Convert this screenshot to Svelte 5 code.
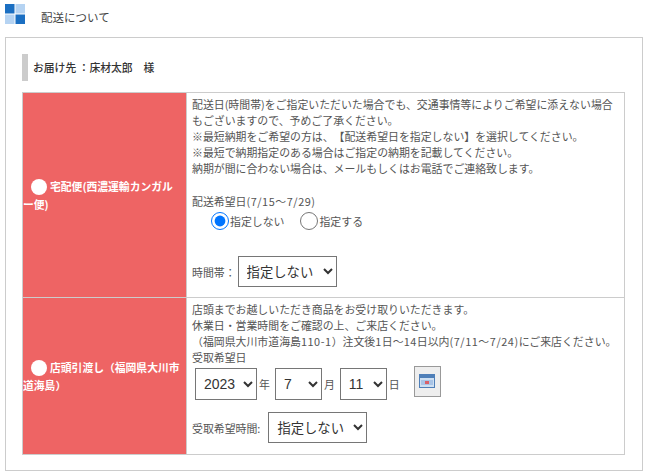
<script>
  const years = ['2023'];
  const months = ['7'];
  const days = ['11'];
</script>

<div class="page">
  <header class="head">
    <svg class="logo" width="20" height="20" viewBox="0 0 20 20" aria-hidden="true">
      <rect x="0" y="0" width="9.500" height="9.500" fill="#1b6fc2" />
      <rect x="10.500" y="0" width="9.500" height="9.500" fill="#b5d3f2" />
      <rect x="0" y="10.500" width="9.500" height="9.500" fill="#b5d3f2" />
      <rect x="10.500" y="10.500" width="9.500" height="9.500" fill="#1b6fc2" />
    </svg>
    <h1>配送について</h1>
  </header>

  <section class="card">
    <p class="dest">お届け先 ：床材太郎　様</p>

    <table>
      <tbody>
        <tr class="row-a">
          <th>
            <span class="dot"></span>宅配便(西濃運輸カンガル<br />ー便)
          </th>
          <td>
            <p class="note">配送日(時間帯)をご指定いただいた場合でも、交通事情等によりご希望に添えない場合もございますので、予めご了承ください。<br />※最短納期をご希望の方は、【配送希望日を指定しない】を選択してください。<br />※最短で納期指定のある場合はご指定の納期を記載してください。<br />納期が間に合わない場合は、メールもしくはお電話でご連絡致します。</p>
            <p class="wish">配送希望日<span class="n">(7/15～7/29)</span></p>
            <div class="radios">
              <label><input type="radio" name="d" checked />指定しない</label>
              <label><input type="radio" name="d" />指定する</label>
            </div>
            <div class="time-a">
              <span class="lbl">時間帯：</span><select><option>指定しない</option></select>
            </div>
          </td>
        </tr>
        <tr class="row-b">
          <th>
            <span class="dot"></span>店頭引渡し（福岡県大川市<br />道海島）
          </th>
          <td>
            <p class="note">店頭までお越しいただき商品をお受け取りいただきます。<br />休業日・営業時間をご確認の上、ご来店ください。<br />（福岡県大川市道海島<span class="n">110-1</span>）注文後<span class="n">1</span>日～<span class="n">14</span>日以内<span class="n">(7/11～7/24)</span>にご来店ください。<br />受取希望日</p>
            <div class="date">
              <select class="y">{#each years as v}<option>{v}</option>{/each}</select><span>年</span>
              <select class="m">{#each months as v}<option>{v}</option>{/each}</select><span>月</span>
              <select class="m">{#each days as v}<option>{v}</option>{/each}</select><span>日</span>
              <button class="cal" type="button" aria-label="カレンダー">
                <svg width="16" height="14" viewBox="0 0 16 14" aria-hidden="true">
                  <rect x="0.500" y="0.500" width="15" height="13" fill="#cfe0f2" stroke="#4f7fb8" />
                  <rect x="1" y="1" width="14" height="3" fill="#4f7fb8" />
                  <rect x="2" y="6" width="12" height="5" fill="#a9c4e6" />
                  <rect x="6" y="7" width="4" height="3" fill="#d9606a" />
                </svg>
              </button>
            </div>
            <div class="time-b">
              <span class="lbl-b">受取希望時間:</span><select><option>指定しない</option></select>
            </div>
          </td>
        </tr>
      </tbody>
    </table>
  </section>
</div>

<style>
  :global(body) {
    margin: 0;
    background: #fff;
  }
  .page {
    width: 653px;
    height: 475px;
    overflow: hidden;
    box-sizing: border-box;
    padding: 4px 10px 0 5px;
    font-family: "Noto Sans CJK JP", "Noto Sans", sans-serif;
    font-size: 10.900px;
    line-height: 16px;
    color: #555;
    text-spacing-trim: space-all;
  }
  .n {
    letter-spacing: 0.550px;
  }
  .head {
    display: flex;
    align-items: flex-start;
    gap: 16px;
    height: 33px;
  }
  .logo {
    display: block;
  }
  h1 {
    margin: 5px 0 0;
    font-size: 11.500px;
    line-height: 16px;
    font-weight: 400;
    color: #444;
  }
  .card {
    box-sizing: border-box;
    width: 638px;
    height: 434px;
    border: 1px solid #ccc;
    padding: 16px 17px 0 16px;
  }
  .dest {
    margin: 0 0 11px;
    height: 27px;
    border-left: 6px solid #ccc;
    padding-left: 5px;
    font-size: 10.800px;
    line-height: 26px;
    font-weight: 500;
    color: #333;
  }
  table {
    width: 603px;
    border-collapse: collapse;
    table-layout: fixed;
  }
  th {
    width: 163px;
    background: #ee6464;
    color: #fff;
    border: 1px solid #ccc;
    text-align: left;
    vertical-align: middle;
    font-size: 10.800px;
    line-height: 18px;
    font-weight: 700;
    padding: 0;
  }
  td {
    border: 1px solid #ccc;
    padding: 3px 5px;
    vertical-align: top;
  }
  .row-a {
    height: 205px;
  }
  .row-b {
    height: 157px;
  }
  .dot {
    display: inline-block;
    width: 16px;
    height: 16px;
    margin: 0 3px 0 8px;
    border-radius: 50%;
    background: #fff;
    vertical-align: -4px;
  }
  p {
    margin: 0;
  }
  .wish {
    margin-top: 17px;
  }
  .radios {
    display: flex;
    gap: 16px;
    padding-left: 19px;
    height: 23px;
    align-items: center;
  }
  label {
    display: flex;
    align-items: center;
  }
  input[type="radio"] {
    width: 18px;
    height: 18px;
    margin: 0 1px 0 0;
    accent-color: #0075ff;
  }
  select {
    box-sizing: border-box;
    height: 31px;
    font-family: "Noto Sans CJK JP", sans-serif;
    font-size: 13.330px;
    color: #333;
    background: #fff;
    border: 1px solid #767676;
    border-radius: 0;
    padding: 0 0 0 4px;
  }
  .lbl {
    margin-right: 2px;
  }
  .lbl-b {
    margin-right: 8px;
  }
  .time-a {
    margin-top: 24px;
    display: flex;
    align-items: center;
  }
  .time-a select,
  .time-b select {
    width: 99px;
  }
  .date {
    display: flex;
    align-items: center;
    height: 36px;
    margin-top: 1px;
    padding-left: 3px;
  }
  .date select {
    height: 32px;
    font-family: "Liberation Sans", sans-serif;
    font-size: 14px;
  }
  .date .y {
    width: 62px;
  }
  .date .m {
    width: 47px;
  }
  .date span {
    margin: 0 5px 0 2px;
  }
  .cal {
    box-sizing: border-box;
    width: 27px;
    height: 31px;
    margin: -6px 0 0 9px;
    padding: 0;
    display: flex;
    align-items: center;
    justify-content: center;
    background: #eee;
    border: 1px solid #999;
  }
  .time-b {
    margin-top: 10px;
    display: flex;
    align-items: center;
  }
</style>
